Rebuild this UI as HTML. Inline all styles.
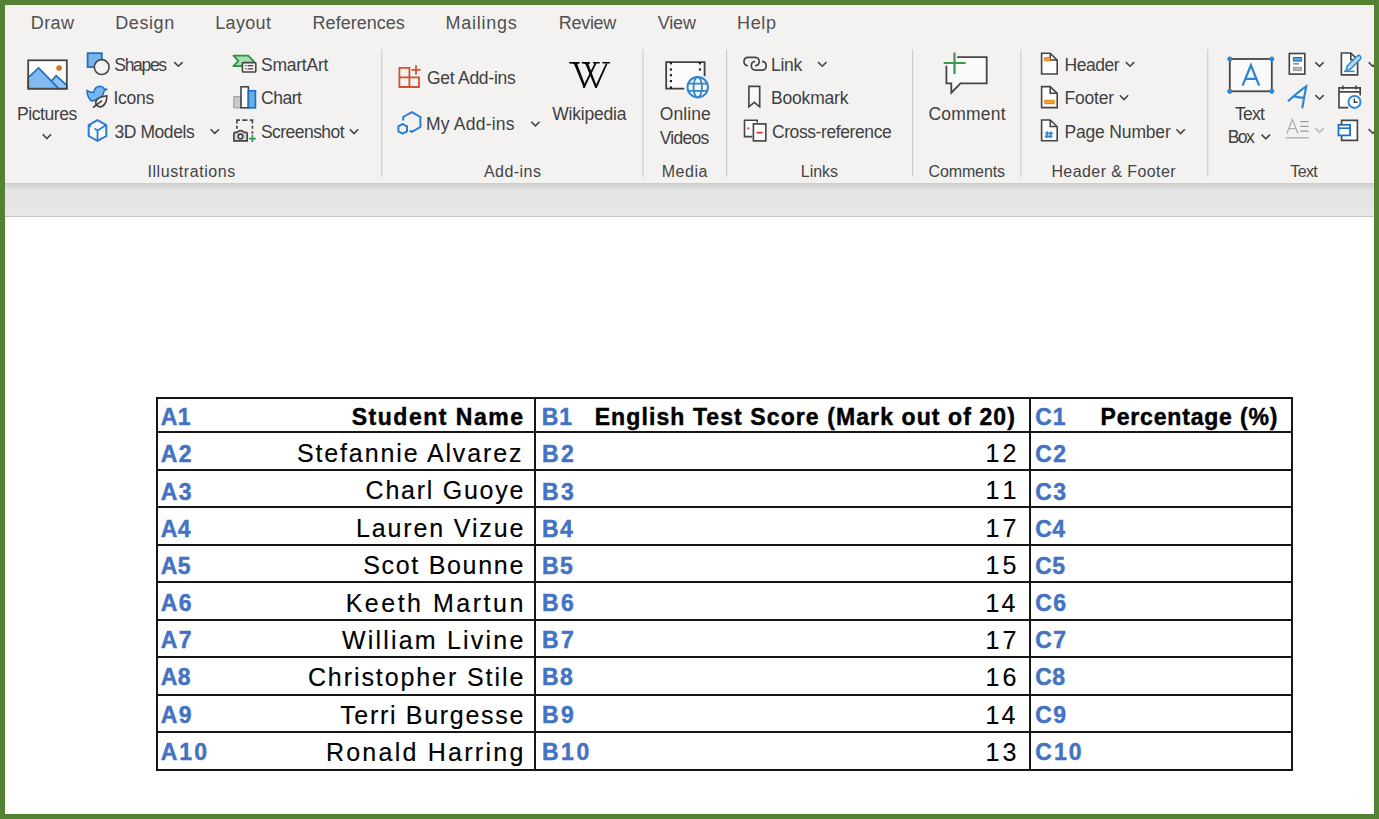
<!DOCTYPE html>
<html><head><meta charset="utf-8"><style>
html,body{margin:0;padding:0;}
body{width:1379px;height:819px;position:relative;overflow:hidden;background:#548235;font-family:"Liberation Sans", sans-serif;}
#inner{position:absolute;left:5px;top:5px;width:1369px;height:809px;background:#fff;overflow:hidden;}
#ribbon{position:absolute;left:0;top:0;width:1369px;height:177.6px;background:#f3f2f1;}
#band{position:absolute;left:0;top:177.6px;width:1369px;height:34px;background:linear-gradient(#c9caca 0px,#d6d7d7 3px,#e2e3e3 7px,#e6e6e6 10px,#e6e6e6 31px,#e9e9e9 33px);}
#bline{position:absolute;left:0;top:211px;width:1369px;height:1px;background:#c6c6c6;}
#abs{position:absolute;left:0;top:0;width:1379px;height:819px;}
#abs span{position:absolute;white-space:nowrap;font-family:"Liberation Sans", sans-serif;}
.rb{-webkit-text-stroke:0px currentColor;}
.tb{-webkit-text-stroke:0.45px currentColor;}
.tn{-webkit-text-stroke:0.15px currentColor;}
.ln{position:absolute;background:#161616;}
</style></head><body>
<div id="inner"><div id="ribbon"></div><div id="band"></div><div id="bline"></div></div>
<svg style="position:absolute;left:0;top:0" width="1379" height="220" viewBox="0 0 1379 220">
<defs><clipPath id="cp"><rect x="5" y="5" width="1369" height="215"/></clipPath></defs>
<g clip-path="url(#cp)" fill="none" stroke-linejoin="miter">
<!-- separators -->
<g stroke="#c8c6c4" stroke-width="1">
<line x1="381.8" y1="49.3" x2="381.8" y2="176.6"/>
<line x1="642.9" y1="49.3" x2="642.9" y2="176.6"/>
<line x1="726.7" y1="49.3" x2="726.7" y2="176.6"/>
<line x1="912.6" y1="49.3" x2="912.6" y2="176.6"/>
<line x1="1020.9" y1="49.3" x2="1020.9" y2="176.6"/>
<line x1="1207.8" y1="49.3" x2="1207.8" y2="176.6"/>
</g>
<!-- chevrons -->
<g stroke="#444" stroke-width="1.6">
<polyline points="42.7,134.3 46.9,138.5 51.1,134.3"/>
<polyline points="174.2,62.1 178.4,66.2 182.6,62.1"/>
<polyline points="210.6,129.2 214.8,133.3 219.0,129.2"/>
<polyline points="349.8,129.3 354.0,133.5 358.2,129.3"/>
<polyline points="531.2,121.7 535.4,125.8 539.6,121.7"/>
<polyline points="818.1,62.1 822.3,66.2 826.5,62.1"/>
<polyline points="1125.8,62.1 1130.0,66.2 1134.2,62.1"/>
<polyline points="1119.8,95.3 1124.0,99.5 1128.2,95.3"/>
<polyline points="1176.4,129.3 1180.6,133.5 1184.8,129.3"/>
<polyline points="1261.6,134.6 1265.8,138.8 1270.0,134.6"/>
<polyline points="1315.3,62.2 1319.5,66.4 1323.7,62.2"/>
<polyline points="1315.3,95.1 1319.5,99.2 1323.7,95.1"/>
<polyline points="1368.6,62.2 1372.8,66.4 1377.0,62.2"/>
<polyline points="1368.6,129.1 1372.8,133.2 1377.0,129.1"/>
</g>
<polyline points="1315.3,128.1 1319.5,132.2 1323.7,128.1" stroke="#b8b8b8" stroke-width="1.5"/>

<!-- Pictures -->
<rect x="28.2" y="60.3" width="38.6" height="28.4" fill="#fdfdfd"/>
<polygon points="28.2,77.6 38.6,67.9 59,88.7 28.2,88.7" fill="#80b9ee" stroke="#1b6ec0" stroke-width="1.6"/>
<polygon points="51.4,81 56.2,75.6 66.8,85.4 66.8,88.7 59,88.7" fill="#8ec5f4" stroke="#1b6ec0" stroke-width="1.6"/>
<circle cx="59.1" cy="68" r="2.8" fill="#e0701c"/>
<rect x="28.2" y="60.3" width="38.6" height="28.4" stroke="#454545" stroke-width="1.8"/>

<!-- Shapes -->
<rect x="87.6" y="53.2" width="14.2" height="13.8" fill="#7ab6ee" stroke="#1b6ec0" stroke-width="1.8"/>
<circle cx="101.7" cy="67.1" r="7.4" fill="#f3f2f1" stroke="#4a4a4a" stroke-width="1.7"/>

<!-- Icons: bird + leaf -->
<path d="M87,90.6 Q90,92.5 93.5,92.6 Q95,86.3 99.8,86.3 Q103,86.5 104,88.6 L106.6,89.4 L103.8,91.5 Q103.5,96 99,98.5 Q95,101 91.5,101 Q87.2,98 87,90.6 Z" fill="#7ab6ee" stroke="#1b6ec0" stroke-width="1.5"/>
<path d="M96,104.8 Q94.8,98.6 101.4,97 L106.7,95.8 Q107.2,102.6 102.8,106 Q99,108.2 96,104.8 Z" fill="#f3f2f1" stroke="#404040" stroke-width="1.6"/>
<path d="M93,107.6 L102,100.6" stroke="#404040" stroke-width="1.6"/>

<!-- 3D Models cube -->
<path d="M97.5,120.2 L106.3,125 L106.3,136 L97.5,140.9 L88.7,136 L88.7,125 Z" fill="#fbfbfb" stroke="#2b7cd3" stroke-width="2"/>
<path d="M97.5,130.4 L106.3,125 M97.5,130.4 L97.5,140.9 M97.5,130.4 L94.5,128.6 M91,126.4 L89.5,125.5" stroke="#2b7cd3" stroke-width="1.8"/>

<!-- SmartArt -->
<polygon points="233.4,55.6 248.2,55.6 253.8,61.4 248.6,66.2 233.4,66.2 238.4,60.9" fill="#a3dfae" stroke="#2e9142" stroke-width="1.8" stroke-linejoin="round"/>
<rect x="242.4" y="62.6" width="13.4" height="9.4" rx="0.8" fill="#f3f2f1" stroke="#454545" stroke-width="1.6"/>
<path d="M245.2,65.6 H246.4 M247.6,65.6 H253.2 M245.2,68.8 H246.4 M247.6,68.8 H253.2" stroke="#404040" stroke-width="1.2"/>

<!-- Chart -->
<rect x="233.8" y="96.6" width="7" height="11.3" fill="#c9c9c9" stroke="#a0a0a0" stroke-width="1.1"/>
<rect x="241" y="86.8" width="7.4" height="21" fill="#fff" stroke="#454545" stroke-width="1.6"/>
<rect x="248.4" y="90.8" width="7" height="17" fill="#69ade9" stroke="#1f6fbf" stroke-width="1.7"/>

<!-- Screenshot -->
<path d="M236.9,123.4 V120.1 H239.9 M242.2,120.1 H247.4 M249.7,120.1 H252.4 V123.4 M236.9,125.8 V128.8 M252.4,125.8 V128.8 M252.4,131.2 V133.8" stroke="#4a4a4a" stroke-width="1.7"/>
<path d="M233.9,133.6 Q233.9,132.4 235.2,132.4 H237.2 Q238.4,130.6 240.6,130.6 Q242.8,130.6 244,132.4 H246 Q247.2,132.4 247.2,133.6 V140.8 H233.9 Z" fill="#d8d8d8" stroke="#454545" stroke-width="1.65"/>
<circle cx="240.5" cy="136.4" r="2.3" fill="#f6f6f6" stroke="#404040" stroke-width="1.6"/>
<path d="M248.9,138.6 H255.9 M252.4,135.1 V142.1" stroke="#2f9e4a" stroke-width="1.8"/>

<!-- Get Add-ins -->
<path d="M399.4,67.8 H409.4 V87 H399.4 Z M399.4,77.4 H419 V87 H409.4" stroke="#d4512f" stroke-width="1.8"/>
<path d="M411.4,69.8 H420.6 M416,65.2 V74.4" stroke="#d4512f" stroke-width="1.8"/>

<!-- My Add-ins -->
<path d="M403.2,120.6 V117 L411.8,112.2 L420.4,117 V127 L411.8,131.8 L409.6,130.6" stroke="#2b7cd3" stroke-width="2"/>
<path d="M402.7,124 L407,126.4 V131.3 L402.7,133.7 L398.4,131.3 V126.4 Z" stroke="#2b7cd3" stroke-width="2"/>

<!-- Wikipedia W -->
<g fill="#0a0a0a" stroke="none">
<path d="M569.2,62 H579.6 V63.5 Q577.6,63.6 577.4,64.4 L585.6,86 L584.4,88 Q583.8,88 583.5,87.2 L574.2,64.4 Q573.6,63.6 569.2,63.5 Z"/>
<path d="M582.6,87.4 L594.8,62.8 H596.8 L584.6,88 Z"/>
<path d="M581.8,62 H590 V63.5 Q588.4,63.6 588.6,64.6 L596.8,86 L595.8,88 Q595.3,88 595,87.2 L585.6,64.4 Q585,63.6 581.8,63.5 Z"/>
<path d="M594.8,87.4 L605.8,63.4 H607.6 L596.8,88 Z"/>
<path d="M593,62 H599.8 V63.5 H593 Z"/>
<path d="M602.4,62 H610 V63.5 H602.4 Z"/>
</g>

<!-- Online Videos -->
<rect x="666.2" y="62.2" width="38.4" height="26.6" fill="#fbfbfb"/>
<path d="M684.3,88.6 H666.2 V62.2 H704.6 V76.3" stroke="#404040" stroke-width="1.8"/>
<g fill="#222" stroke="none">
<rect x="669.8" y="62" width="2.2" height="2.4"/><rect x="669.8" y="68.4" width="2.2" height="2.2"/><rect x="669.8" y="74.1" width="2.2" height="2.2"/><rect x="669.8" y="80" width="2.2" height="2.2"/><rect x="669.8" y="86.4" width="2.2" height="2.4"/>
<rect x="698.8" y="62" width="2.2" height="2.4"/><rect x="698.8" y="68.4" width="2.2" height="2.2"/>
</g>
<circle cx="697.7" cy="87.2" r="10.2" fill="#f8f8f8" stroke="#2e86d0" stroke-width="2"/>
<ellipse cx="697.7" cy="87.2" rx="4.2" ry="10.2" stroke="#2e86d0" stroke-width="1.8"/>
<path d="M688.2,83.6 H707.2 M688.2,90.8 H707.2" stroke="#2e86d0" stroke-width="1.8"/>

<!-- Link -->
<path d="M747.8,65.9 Q744,65.4 744,61.6 Q744,57.4 748.5,57.4 H755.5 Q759.2,57.6 759.2,61.6 Q759,65.4 755,65.8" stroke="#454545" stroke-width="1.65"/>
<path d="M755.2,61.4 Q751.3,61.8 751.3,65.8 Q751.5,70.1 755.5,70.1 H762.5 Q766.2,69.9 766.2,65.8 Q766,61.8 762,61.4" stroke="#454545" stroke-width="1.65"/>

<!-- Bookmark -->
<path d="M748.9,86.3 H759.7 V106.8 L754.3,102.4 L748.9,106.8 Z" fill="#fafafa" stroke="#454545" stroke-width="1.65"/>

<!-- Cross-reference -->
<path d="M757.2,122.6 V120.3 H744.5 V136.6 H752.2" fill="#fafafa" stroke="#454545" stroke-width="1.6"/>
<rect x="753.4" y="123.9" width="12.4" height="17" fill="#fff" stroke="#454545" stroke-width="1.65"/>
<path d="M747.4,128.4 H749.2 M756.6,132.6 H762.6" stroke="#e22b2b" stroke-width="1.6"/>

<!-- Comment -->
<path d="M946.4,65.8 V83.3 H951.3 V92.7 L960.5,83.3 H986.7 V57.1 H957.2" fill="#fafafa" stroke="#454545" stroke-width="1.8"/>
<path d="M943.7,63 H965.6 M954.5,52.4 V73.9" stroke="#3a9a4a" stroke-width="2.2"/>

<!-- Header / Footer / Page Number -->
<g stroke="#454545" stroke-width="1.6" fill="#fdfdfd">
<path d="M1041.6,53.3 H1050.2 L1057.2,60.1 V74 H1041.6 Z"/>
<path d="M1041.6,86.6 H1050.2 L1057.2,93.4 V107.6 H1041.6 Z"/>
<path d="M1041.6,120 H1050.2 L1057.2,126.8 V140.8 H1041.6 Z"/>
</g>
<path d="M1050.2,53.5 V59.9 H1057 M1050.2,86.8 V93.2 H1057 M1050.2,120.2 V126.6 H1057" stroke="#404040" stroke-width="1.5"/>
<rect x="1044.3" y="57.6" width="6" height="3.2" rx="1" fill="#f2a33a" stroke="#d97a00" stroke-width="0.9"/>
<rect x="1044.3" y="100.3" width="10.3" height="3.4" rx="1" fill="#f2a33a" stroke="#d97a00" stroke-width="0.9"/>
<path d="M1047.4,131.4 L1046.6,138.2 M1051,131.4 L1050.2,138.2 M1045.2,133.4 H1052.8 M1044.8,136.4 H1052.4" stroke="#2e86d0" stroke-width="1.6"/>

<!-- Text Box -->
<rect x="1229.8" y="59" width="42" height="32.3" fill="#fafafa" stroke="#454545" stroke-width="1.8"/>
<g fill="#2e86d0" stroke="#2e86d0" stroke-width="1">
<circle cx="1229.8" cy="59" r="2.1"/><circle cx="1271.8" cy="59" r="2.1"/><circle cx="1229.8" cy="91.3" r="2.1"/><circle cx="1271.8" cy="91.3" r="2.1"/>
</g>
<path d="M1242.6,85.6 L1250.9,65.4 L1259.2,85.6 M1245.3,78.8 H1256.5" stroke="#2e86d0" stroke-width="2.3"/>

<!-- Quick Parts -->
<rect x="1289.3" y="53.5" width="15.5" height="20.6" fill="#fff" stroke="#454545" stroke-width="1.65"/>
<rect x="1293.4" y="57.5" width="8.2" height="3.6" fill="#5aa0e0" stroke="#1f6fbf" stroke-width="1"/>
<path d="M1293.2,63.9 H1299" stroke="#404040" stroke-width="1"/>
<rect x="1293.4" y="67.3" width="8.2" height="3.4" fill="#b5b5b5" stroke="#8a8a8a" stroke-width="0.8"/>

<!-- WordArt -->
<path d="M1288.6,100.8 Q1298,92 1306.2,86.4 L1302.4,107.4 M1294.2,96.4 Q1299.4,97.6 1304,97.8" stroke="#2e86d0" stroke-width="2.2" stroke-linecap="round"/>

<!-- Drop Cap -->
<path d="M1286.8,133.6 L1292.4,119.6 L1298,133.6 M1288.8,128.6 H1296" stroke="#b0b0b0" stroke-width="1.4"/>
<path d="M1300.2,121.6 H1308.6 M1300.2,126.4 H1308.6 M1300.2,131.2 H1308.6" stroke="#9a9a9a" stroke-width="1.3"/>
<path d="M1286,137.8 H1309" stroke="#b0b0b0" stroke-width="1.4"/>

<!-- Signature -->
<path d="M1341.4,53 H1350.8 L1357.6,59.6 V74.9 H1341.4 Z" fill="#fff" stroke="#454545" stroke-width="1.65"/>
<path d="M1350.8,53 V59.8 H1354.6" stroke="#404040" stroke-width="1.6"/>
<path d="M1346,70.6 L1347.2,65.8 L1357.2,56 Q1359,54.6 1360.4,56.2 Q1361.6,57.8 1360,59.4 L1350.2,69.4 Z" fill="#b9d8f4" stroke="#2e86d0" stroke-width="1.5"/>
<path d="M1344,71.4 H1354.6" stroke="#2e86d0" stroke-width="1.5"/>

<!-- Date & Time -->
<path d="M1348.2,107.6 H1339 V87.8 H1360.2 V95.4 M1339,91.8 H1360.2" fill="#fff" stroke="#454545" stroke-width="1.65"/>
<path d="M1342.8,85.6 V89.4 M1356.1,85.6 V89.4" stroke="#454545" stroke-width="1.6"/>
<circle cx="1354.5" cy="101.9" r="6" fill="#fff" stroke="#2e86d0" stroke-width="2"/>
<path d="M1354.3,98.4 V102.3 H1357.6" stroke="#404040" stroke-width="1.4"/>

<!-- Object -->
<path d="M1341.6,124.8 V120.3 H1357.4 V140.4 H1341.6 V135.6" fill="#fff" stroke="#454545" stroke-width="1.65"/>
<rect x="1338.5" y="124.8" width="11.6" height="10.6" fill="#fff" stroke="#1f6fbf" stroke-width="1.8"/>
<path d="M1338.5,128.2 H1350.1" stroke="#1f6fbf" stroke-width="1.6"/>
</g>
</svg>

<div id="abs">
<div class="ln" style="left:156px;top:397px;width:1137px;height:2px"></div>
<div class="ln" style="left:156px;top:431px;width:1137px;height:2px"></div>
<div class="ln" style="left:156px;top:469px;width:1137px;height:2px"></div>
<div class="ln" style="left:156px;top:506px;width:1137px;height:2px"></div>
<div class="ln" style="left:156px;top:544px;width:1137px;height:2px"></div>
<div class="ln" style="left:156px;top:581px;width:1137px;height:2px"></div>
<div class="ln" style="left:156px;top:619px;width:1137px;height:2px"></div>
<div class="ln" style="left:156px;top:656px;width:1137px;height:2px"></div>
<div class="ln" style="left:156px;top:694px;width:1137px;height:2px"></div>
<div class="ln" style="left:156px;top:731px;width:1137px;height:2px"></div>
<div class="ln" style="left:156px;top:769px;width:1137px;height:2px"></div>
<div class="ln" style="left:156px;top:397px;width:2px;height:374px"></div>
<div class="ln" style="left:534px;top:397px;width:2px;height:374px"></div>
<div class="ln" style="left:1029px;top:397px;width:2px;height:374px"></div>
<div class="ln" style="left:1291px;top:397px;width:2px;height:374px"></div>
<span class="rb" style="left:30.70px;top:13.66px;font-size:18px;line-height:18px;font-weight:400;color:#505050;letter-spacing:0.465px">Draw</span>
<span class="rb" style="left:115.20px;top:13.66px;font-size:18px;line-height:18px;font-weight:400;color:#505050;letter-spacing:0.596px">Design</span>
<span class="rb" style="left:215.20px;top:13.66px;font-size:18px;line-height:18px;font-weight:400;color:#505050;letter-spacing:0.351px">Layout</span>
<span class="rb" style="left:312.60px;top:13.66px;font-size:18px;line-height:18px;font-weight:400;color:#505050;letter-spacing:0.017px">References</span>
<span class="rb" style="left:445.50px;top:13.66px;font-size:18px;line-height:18px;font-weight:400;color:#505050;letter-spacing:0.740px">Mailings</span>
<span class="rb" style="left:558.80px;top:13.66px;font-size:18px;line-height:18px;font-weight:400;color:#505050;letter-spacing:-0.304px">Review</span>
<span class="rb" style="left:657.80px;top:13.66px;font-size:18px;line-height:18px;font-weight:400;color:#505050;letter-spacing:-0.197px">View</span>
<span class="rb" style="left:737.00px;top:13.66px;font-size:18px;line-height:18px;font-weight:400;color:#505050;letter-spacing:0.664px">Help</span>
<span class="rb" style="left:17.10px;top:106.08px;font-size:17.5px;line-height:17.5px;font-weight:400;color:#404040;letter-spacing:-0.438px">Pictures</span>
<span class="rb" style="left:114.30px;top:56.88px;font-size:17.5px;line-height:17.5px;font-weight:400;color:#404040;letter-spacing:-1.321px">Shapes</span>
<span class="rb" style="left:113.50px;top:90.28px;font-size:17.5px;line-height:17.5px;font-weight:400;color:#404040;letter-spacing:-0.294px">Icons</span>
<span class="rb" style="left:114.50px;top:123.58px;font-size:17.5px;line-height:17.5px;font-weight:400;color:#404040;letter-spacing:-0.437px">3D Models</span>
<span class="rb" style="left:261.00px;top:56.88px;font-size:17.5px;line-height:17.5px;font-weight:400;color:#404040;letter-spacing:-0.239px">SmartArt</span>
<span class="rb" style="left:261.00px;top:90.28px;font-size:17.5px;line-height:17.5px;font-weight:400;color:#404040;letter-spacing:-0.483px">Chart</span>
<span class="rb" style="left:261.00px;top:123.58px;font-size:17.5px;line-height:17.5px;font-weight:400;color:#404040;letter-spacing:-0.551px">Screenshot</span>
<span class="rb" style="left:426.90px;top:69.78px;font-size:17.5px;line-height:17.5px;font-weight:400;color:#404040;letter-spacing:-0.255px">Get Add-ins</span>
<span class="rb" style="left:425.90px;top:116.28px;font-size:17.5px;line-height:17.5px;font-weight:400;color:#404040;letter-spacing:0.236px">My Add-ins</span>
<span class="rb" style="left:552.30px;top:105.98px;font-size:17.5px;line-height:17.5px;font-weight:400;color:#404040;letter-spacing:-0.204px">Wikipedia</span>
<span class="rb" style="left:659.70px;top:105.98px;font-size:17.5px;line-height:17.5px;font-weight:400;color:#404040;letter-spacing:0.089px">Online</span>
<span class="rb" style="left:659.70px;top:129.58px;font-size:17.5px;line-height:17.5px;font-weight:400;color:#404040;letter-spacing:-0.728px">Videos</span>
<span class="rb" style="left:770.90px;top:56.88px;font-size:17.5px;line-height:17.5px;font-weight:400;color:#404040;letter-spacing:-0.218px">Link</span>
<span class="rb" style="left:770.90px;top:90.28px;font-size:17.5px;line-height:17.5px;font-weight:400;color:#404040;letter-spacing:-0.161px">Bookmark</span>
<span class="rb" style="left:771.90px;top:123.58px;font-size:17.5px;line-height:17.5px;font-weight:400;color:#404040;letter-spacing:-0.402px">Cross-reference</span>
<span class="rb" style="left:928.50px;top:106.18px;font-size:17.5px;line-height:17.5px;font-weight:400;color:#404040;letter-spacing:0.201px">Comment</span>
<span class="rb" style="left:1064.50px;top:56.88px;font-size:17.5px;line-height:17.5px;font-weight:400;color:#404040;letter-spacing:-0.454px">Header</span>
<span class="rb" style="left:1064.50px;top:90.28px;font-size:17.5px;line-height:17.5px;font-weight:400;color:#404040;letter-spacing:-0.190px">Footer</span>
<span class="rb" style="left:1064.50px;top:123.58px;font-size:17.5px;line-height:17.5px;font-weight:400;color:#404040;letter-spacing:-0.175px">Page Number</span>
<span class="rb" style="left:1235.00px;top:105.98px;font-size:17.5px;line-height:17.5px;font-weight:400;color:#404040;letter-spacing:-0.744px">Text</span>
<span class="rb" style="left:1227.70px;top:129.28px;font-size:17.5px;line-height:17.5px;font-weight:400;color:#404040;letter-spacing:-1.553px">Box</span>
<span class="rb" style="left:147.40px;top:163.95px;font-size:16px;line-height:16px;font-weight:400;color:#444444;letter-spacing:0.582px">Illustrations</span>
<span class="rb" style="left:484.00px;top:163.95px;font-size:16px;line-height:16px;font-weight:400;color:#444444;letter-spacing:0.442px">Add-ins</span>
<span class="rb" style="left:661.70px;top:163.95px;font-size:16px;line-height:16px;font-weight:400;color:#444444;letter-spacing:0.530px">Media</span>
<span class="rb" style="left:800.80px;top:163.95px;font-size:16px;line-height:16px;font-weight:400;color:#444444;letter-spacing:-0.038px">Links</span>
<span class="rb" style="left:928.50px;top:163.95px;font-size:16px;line-height:16px;font-weight:400;color:#444444;letter-spacing:-0.122px">Comments</span>
<span class="rb" style="left:1051.40px;top:163.95px;font-size:16px;line-height:16px;font-weight:400;color:#444444;letter-spacing:0.425px">Header &amp; Footer</span>
<span class="rb" style="left:1290.30px;top:163.95px;font-size:16px;line-height:16px;font-weight:400;color:#444444;letter-spacing:-0.633px">Text</span>
<span class="tb" style="left:160.70px;top:406.12px;font-size:23px;line-height:23px;font-weight:700;color:#4472c4;letter-spacing:0.490px">A1</span>
<span class="tb" style="left:541.70px;top:406.12px;font-size:23px;line-height:23px;font-weight:700;color:#4472c4;letter-spacing:0.890px">B1</span>
<span class="tb" style="left:1035.30px;top:406.12px;font-size:23px;line-height:23px;font-weight:700;color:#4472c4;letter-spacing:0.790px">C1</span>
<span class="tb" style="left:351.70px;top:405.52px;font-size:23px;line-height:23px;font-weight:700;color:#000;letter-spacing:1.524px">Student Name</span>
<span class="tb" style="left:594.70px;top:405.52px;font-size:23px;line-height:23px;font-weight:700;color:#000;letter-spacing:1.094px">English Test Score (Mark out of 20)</span>
<span class="tb" style="left:1100.50px;top:405.52px;font-size:23px;line-height:23px;font-weight:700;color:#000;letter-spacing:0.823px">Percentage (%)</span>
<span class="tb" style="left:160.70px;top:443.42px;font-size:23px;line-height:23px;font-weight:700;color:#4472c4;letter-spacing:1.390px">A2</span>
<span class="tb" style="left:541.90px;top:443.42px;font-size:23px;line-height:23px;font-weight:700;color:#4472c4;letter-spacing:2.390px">B2</span>
<span class="tb" style="left:1035.30px;top:443.42px;font-size:23px;line-height:23px;font-weight:700;color:#4472c4;letter-spacing:1.390px">C2</span>
<span class="tn" style="left:296.90px;top:440.73px;font-size:25px;line-height:25px;font-weight:400;color:#000;letter-spacing:1.878px">Stefannie Alvarez</span>
<span class="tn" style="left:985.50px;top:440.73px;font-size:25px;line-height:25px;font-weight:400;color:#000;letter-spacing:3.096px">12</span>
<span class="tb" style="left:160.70px;top:480.58px;font-size:23px;line-height:23px;font-weight:700;color:#4472c4;letter-spacing:1.390px">A3</span>
<span class="tb" style="left:541.90px;top:480.58px;font-size:23px;line-height:23px;font-weight:700;color:#4472c4;letter-spacing:2.390px">B3</span>
<span class="tb" style="left:1035.30px;top:480.58px;font-size:23px;line-height:23px;font-weight:700;color:#4472c4;letter-spacing:1.390px">C3</span>
<span class="tn" style="left:365.60px;top:478.19px;font-size:25px;line-height:25px;font-weight:400;color:#000;letter-spacing:1.736px">Charl Guoye</span>
<span class="tn" style="left:985.50px;top:478.19px;font-size:25px;line-height:25px;font-weight:400;color:#000;letter-spacing:4.952px">11</span>
<span class="tb" style="left:160.70px;top:517.74px;font-size:23px;line-height:23px;font-weight:700;color:#4472c4;letter-spacing:0.390px">A4</span>
<span class="tb" style="left:541.90px;top:517.74px;font-size:23px;line-height:23px;font-weight:700;color:#4472c4;letter-spacing:1.390px">B4</span>
<span class="tb" style="left:1035.30px;top:517.74px;font-size:23px;line-height:23px;font-weight:700;color:#4472c4;letter-spacing:0.390px">C4</span>
<span class="tn" style="left:356.10px;top:515.65px;font-size:25px;line-height:25px;font-weight:400;color:#000;letter-spacing:1.848px">Lauren Vizue</span>
<span class="tn" style="left:985.50px;top:515.65px;font-size:25px;line-height:25px;font-weight:400;color:#000;letter-spacing:3.096px">17</span>
<span class="tb" style="left:160.70px;top:554.90px;font-size:23px;line-height:23px;font-weight:700;color:#4472c4;letter-spacing:0.390px">A5</span>
<span class="tb" style="left:541.90px;top:554.90px;font-size:23px;line-height:23px;font-weight:700;color:#4472c4;letter-spacing:1.390px">B5</span>
<span class="tb" style="left:1035.30px;top:554.90px;font-size:23px;line-height:23px;font-weight:700;color:#4472c4;letter-spacing:0.390px">C5</span>
<span class="tn" style="left:363.20px;top:553.11px;font-size:25px;line-height:25px;font-weight:400;color:#000;letter-spacing:1.694px">Scot Bounne</span>
<span class="tn" style="left:985.50px;top:553.11px;font-size:25px;line-height:25px;font-weight:400;color:#000;letter-spacing:3.096px">15</span>
<span class="tb" style="left:160.70px;top:592.06px;font-size:23px;line-height:23px;font-weight:700;color:#4472c4;letter-spacing:1.390px">A6</span>
<span class="tb" style="left:541.90px;top:592.06px;font-size:23px;line-height:23px;font-weight:700;color:#4472c4;letter-spacing:2.390px">B6</span>
<span class="tb" style="left:1035.30px;top:592.06px;font-size:23px;line-height:23px;font-weight:700;color:#4472c4;letter-spacing:1.390px">C6</span>
<span class="tn" style="left:345.70px;top:590.57px;font-size:25px;line-height:25px;font-weight:400;color:#000;letter-spacing:2.502px">Keeth Martun</span>
<span class="tn" style="left:985.50px;top:590.57px;font-size:25px;line-height:25px;font-weight:400;color:#000;letter-spacing:2.096px">14</span>
<span class="tb" style="left:160.70px;top:629.22px;font-size:23px;line-height:23px;font-weight:700;color:#4472c4;letter-spacing:1.390px">A7</span>
<span class="tb" style="left:541.90px;top:629.22px;font-size:23px;line-height:23px;font-weight:700;color:#4472c4;letter-spacing:2.390px">B7</span>
<span class="tb" style="left:1035.30px;top:629.22px;font-size:23px;line-height:23px;font-weight:700;color:#4472c4;letter-spacing:1.390px">C7</span>
<span class="tn" style="left:342.00px;top:628.03px;font-size:25px;line-height:25px;font-weight:400;color:#000;letter-spacing:2.192px">William Livine</span>
<span class="tn" style="left:985.50px;top:628.03px;font-size:25px;line-height:25px;font-weight:400;color:#000;letter-spacing:3.096px">17</span>
<span class="tb" style="left:160.70px;top:666.38px;font-size:23px;line-height:23px;font-weight:700;color:#4472c4;letter-spacing:0.390px">A8</span>
<span class="tb" style="left:541.90px;top:666.38px;font-size:23px;line-height:23px;font-weight:700;color:#4472c4;letter-spacing:1.390px">B8</span>
<span class="tb" style="left:1035.30px;top:666.38px;font-size:23px;line-height:23px;font-weight:700;color:#4472c4;letter-spacing:0.390px">C8</span>
<span class="tn" style="left:307.90px;top:665.49px;font-size:25px;line-height:25px;font-weight:400;color:#000;letter-spacing:1.913px">Christopher Stile</span>
<span class="tn" style="left:985.50px;top:665.49px;font-size:25px;line-height:25px;font-weight:400;color:#000;letter-spacing:3.096px">16</span>
<span class="tb" style="left:160.70px;top:703.54px;font-size:23px;line-height:23px;font-weight:700;color:#4472c4;letter-spacing:1.390px">A9</span>
<span class="tb" style="left:541.90px;top:703.54px;font-size:23px;line-height:23px;font-weight:700;color:#4472c4;letter-spacing:2.390px">B9</span>
<span class="tb" style="left:1035.30px;top:703.54px;font-size:23px;line-height:23px;font-weight:700;color:#4472c4;letter-spacing:1.390px">C9</span>
<span class="tn" style="left:340.20px;top:702.95px;font-size:25px;line-height:25px;font-weight:400;color:#000;letter-spacing:1.687px">Terri Burgesse</span>
<span class="tn" style="left:985.50px;top:702.95px;font-size:25px;line-height:25px;font-weight:400;color:#000;letter-spacing:2.096px">14</span>
<span class="tb" style="left:160.70px;top:740.70px;font-size:23px;line-height:23px;font-weight:700;color:#4472c4;letter-spacing:2.049px">A10</span>
<span class="tb" style="left:541.90px;top:740.70px;font-size:23px;line-height:23px;font-weight:700;color:#4472c4;letter-spacing:2.549px">B10</span>
<span class="tb" style="left:1035.30px;top:740.70px;font-size:23px;line-height:23px;font-weight:700;color:#4472c4;letter-spacing:2.049px">C10</span>
<span class="tn" style="left:325.90px;top:740.41px;font-size:25px;line-height:25px;font-weight:400;color:#000;letter-spacing:2.251px">Ronald Harring</span>
<span class="tn" style="left:985.50px;top:740.41px;font-size:25px;line-height:25px;font-weight:400;color:#000;letter-spacing:3.096px">13</span>
</div>
</body></html>
